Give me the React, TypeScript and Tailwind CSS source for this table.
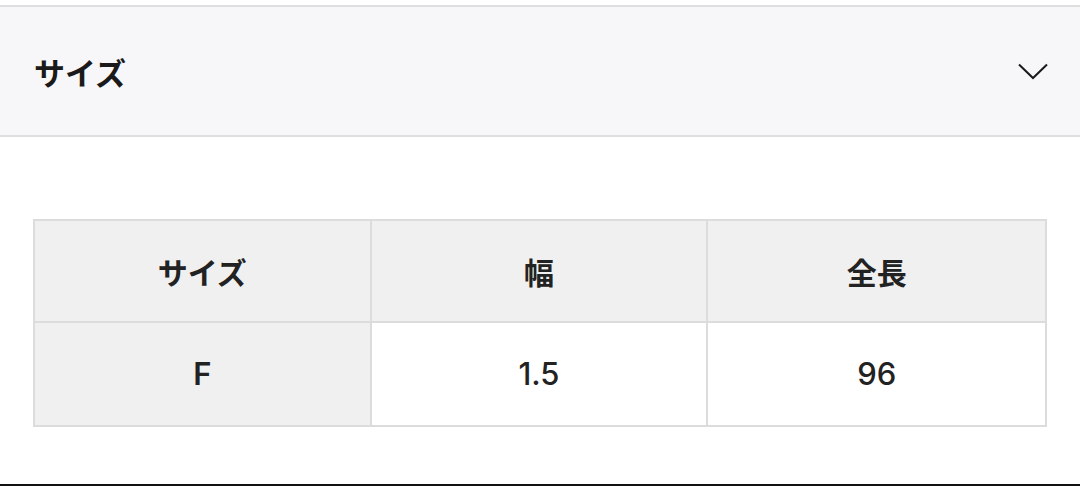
export default function App() {
  const font = { fontFamily: '"Noto Sans CJK JP", "Noto Sans", sans-serif' };
  const num = 'font-["Inter","Noto_Sans_CJK_JP",sans-serif] text-[31px]';
  return (
    <div className="w-[1080px] h-[486px] bg-white flex flex-col text-[#222]" style={font}>
      <div className="mt-[5px] h-[132px] border-y-2 border-[#dedee0] bg-[#f7f7f9] flex items-center justify-between pl-[34px] pr-[32px]">
        <span className="text-[31px] font-bold leading-none text-[#1a1a1a]">サイズ</span>
        <svg width="30" height="17" viewBox="0 0 30 17" fill="none" stroke="#1a1a1a" strokeWidth="2">
          <path d="M1 1.5 L15 15 L29 1.5" />
        </svg>
      </div>
      <div className="flex-1 px-[33px] pt-[82px]">
        <div className="grid grid-cols-3 border-2 border-[#dcdcdc] text-[30px] font-bold">
          <div className="h-[102px] bg-[#f0f0f0] flex items-center justify-center border-r-2 border-b-2 border-[#dcdcdc]">サイズ</div>
          <div className="h-[102px] bg-[#f0f0f0] flex items-center justify-center border-r-2 border-b-2 border-[#dcdcdc]">幅</div>
          <div className="h-[102px] bg-[#f0f0f0] flex items-center justify-center border-b-2 border-[#dcdcdc]">全長</div>
          <div className={`h-[102px] bg-[#f0f0f0] flex items-center justify-center border-r-2 border-[#dcdcdc] font-semibold ${num}`}>F</div>
          <div className={`h-[102px] bg-white flex items-center justify-center border-r-2 border-[#dcdcdc] font-medium ${num}`}>1.5</div>
          <div className={`h-[102px] bg-white flex items-center justify-center font-medium ${num}`}>96</div>
        </div>
      </div>
      <div className="h-[2px] bg-[#111]" />
    </div>
  );
}
